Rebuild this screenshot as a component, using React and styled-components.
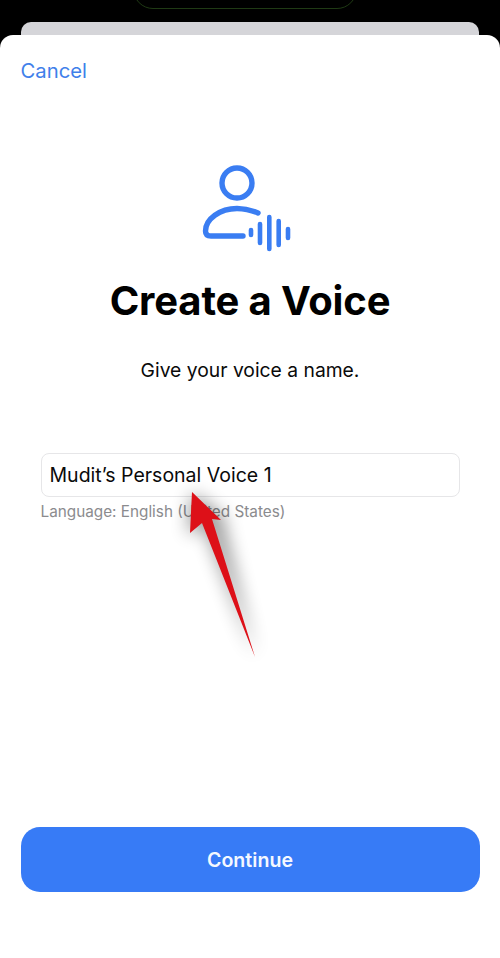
import React from "react";
import styled, { createGlobalStyle } from "styled-components";

const Global = createGlobalStyle`
  html, body { margin: 0; padding: 0; background: #000; }
  body { font-family: Inter, "Liberation Sans", sans-serif; }
`;

const Page = styled.div`
  position: relative;
  width: 500px;
  height: 958px;
  background: #000;
  overflow: hidden;
  display: flex;
  flex-direction: column;
`;

const TopArea = styled.div`
  height: 22px;
  flex: none;
  overflow: hidden;
  display: flex;
  justify-content: center;
`;

const Island = styled.div`
  width: 224px;
  height: 40px;
  flex: none;
  margin: -31px 10px 0 0;
  box-sizing: border-box;
  border: 1px solid #1f3a14;
  border-radius: 24px;
`;

const BackCard = styled.div`
  height: 13px;
  flex: none;
  margin: 0 21px;
  background: #d5d5d9;
  border-radius: 10px 10px 0 0;
`;

const Sheet = styled.main`
  flex: 1;
  background: #fff;
  border-radius: 13px 13px 0 0;
  display: flex;
  flex-direction: column;
  padding: 0 20.5px;
`;

const Cancel = styled.div`
  margin-top: 24px;
  font-size: 20.3px;
  line-height: 24px;
  color: #3f80ea;
`;

const IconWrap = styled.div`
  margin-top: 80px;
  height: 90px;
  display: flex;
  justify-content: center;
`;

const Title = styled.h1`
  margin: 24px 0 0;
  font-size: 40px;
  line-height: 48px;
  font-weight: 700;
  letter-spacing: -0.15px;
  text-align: center;
  color: #000;
`;

const Subtitle = styled.p`
  margin: 32px 0 0;
  font-size: 19.3px;
  line-height: 26px;
  text-align: center;
  color: #0a0a0a;
`;

const NameField = styled.div`
  margin: 70px 20px 0;
  height: 44px;
  box-sizing: border-box;
  border: 1px solid #e6e6e8;
  border-radius: 8px;
  display: flex;
  align-items: center;
  padding: 0 8px;
  font-size: 19.5px;
  color: #0a0a0a;
`;

const Hint = styled.div`
  margin: 5px 20px 0;
  font-size: 15.3px;
  line-height: 20px;
  color: #8b8b8e;
`;

const Button = styled.button`
  margin-top: auto;
  margin-bottom: 66px;
  height: 65px;
  border: none;
  border-radius: 19px;
  background: #377bf6;
  color: #f4f8ff;
  font-family: inherit;
  font-size: 19.6px;
  font-weight: 600;
`;

const Arrow = styled.svg`
  position: absolute;
  left: 130px;
  top: 450px;
  width: 180px;
  height: 250px;
  pointer-events: none;
`;

function VoiceIcon() {
  return (
    <svg width="100" height="90" viewBox="0 0 100 90" fill="none" stroke="#3a7df2" strokeLinecap="round">
      <circle cx="37" cy="20" r="15" strokeWidth="5.4" />
      <path d="M58 50 C51 47 44 45.5 37 45.5 C20 45.5 5.5 56 5.5 68 C5.5 71.5 7.5 73 11 73 H43" strokeWidth="5.4" />
      <path d="M51 67 V72 M60 61 V80 M69.3 54 V86 M78.7 58 V82 M88 66 V75" strokeWidth="4.6" />
    </svg>
  );
}

export default function App() {
  return (
    <Page>
      <Global />
      <TopArea><Island /></TopArea>
      <BackCard />
      <Sheet>
        <Cancel>Cancel</Cancel>
        <IconWrap><VoiceIcon /></IconWrap>
        <Title>Create a Voice</Title>
        <Subtitle>Give your voice a name.</Subtitle>
        <NameField>Mudit’s Personal Voice 1</NameField>
        <Hint>Language: English (United States)</Hint>
        <Button>Continue</Button>
      </Sheet>
      <Arrow viewBox="130 450 180 250">
        <defs>
          <filter id="arrowShadow" x="-80%" y="-30%" width="260%" height="160%">
            <feGaussianBlur stdDeviation="9" />
          </filter>
        </defs>
        <path d="M192 492 L188 535 L204 525 L255 657 L222 518 L230 522 Z" fill="#000" opacity="0.42" filter="url(#arrowShadow)" />
        <path d="M192 492 L190 533 L202 523 L255 657 L212 519 L221 520 Z" fill="#dd1018" />
      </Arrow>
    </Page>
  );
}
